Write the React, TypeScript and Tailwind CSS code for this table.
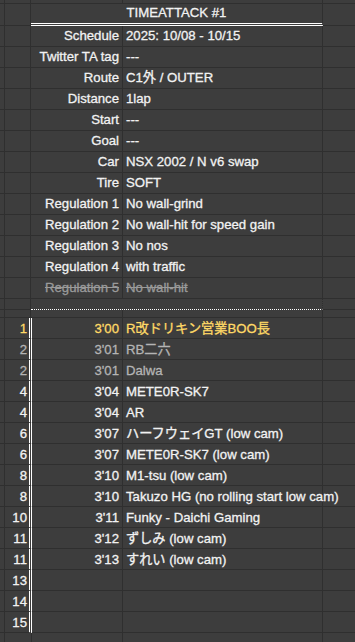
import React from "react";

type Info = { label: string; value: string; struck?: boolean };
type Result = { rank: string; time?: string; name?: string; tone?: "gold" | "dim" };

const info: Info[] = [
  { label: "Schedule", value: "2025: 10/08 - 10/15" },
  { label: "Twitter TA tag", value: "---" },
  { label: "Route", value: "C1外 / OUTER" },
  { label: "Distance", value: "1lap" },
  { label: "Start", value: "---" },
  { label: "Goal", value: "---" },
  { label: "Car", value: "NSX 2002 / N v6 swap" },
  { label: "Tire", value: "SOFT" },
  { label: "Regulation 1", value: "No wall-grind" },
  { label: "Regulation 2", value: "No wall-hit for speed gain" },
  { label: "Regulation 3", value: "No nos" },
  { label: "Regulation 4", value: "with traffic" },
  { label: "Regulation 5", value: "No wall-hit", struck: true },
];

const results: Result[] = [
  { rank: "1", time: "3'00", name: "R改ドリキン営業BOO長", tone: "gold" },
  { rank: "2", time: "3'01", name: "RB二六", tone: "dim" },
  { rank: "2", time: "3'01", name: "Dalwa", tone: "dim" },
  { rank: "4", time: "3'04", name: "METE0R-SK7" },
  { rank: "4", time: "3'04", name: "AR" },
  { rank: "6", time: "3'07", name: "ハーフウェイGT (low cam)" },
  { rank: "6", time: "3'07", name: "METE0R-SK7 (low cam)" },
  { rank: "8", time: "3'10", name: "M1-tsu (low cam)" },
  { rank: "8", time: "3'10", name: "Takuzo HG (no rolling start low cam)" },
  { rank: "10", time: "3'11", name: "Funky - Daichi Gaming" },
  { rank: "11", time: "3'12", name: "ずしみ (low cam)" },
  { rank: "11", time: "3'13", name: "すれい (low cam)" },
  { rank: "13" },
  { rank: "14" },
  { rank: "15" },
];

const line = "border-b border-r border-[#2f2f2f]";

function tone(t?: Result["tone"]) {
  if (t === "gold") return "text-[#ffd966]";
  if (t === "dim") return "text-[#b4b4b4]";
  return "text-[#f2f2f2]";
}

export default function App() {
  return (
    <div
      className="h-[642px] w-[355px] overflow-hidden bg-[#3d3d3d] text-[13.2px] text-[#f2f2f2] [-webkit-text-stroke:0.3px_currentColor]"
      style={{ fontFamily: '"Liberation Sans", Arial, "Noto Sans CJK JP", sans-serif' }}
    >
      {/* partial row above */}
      <div className="flex h-[4px]">
        <div className={`w-[5px] ${line}`} />
        <div className={`w-[26px] ${line}`} />
        <div className={`w-[92px] ${line}`} />
        <div className={`w-[200px] ${line}`} />
        <div className="flex-1 border-b border-[#2f2f2f]" />
      </div>

      {/* title */}
      <div className="flex h-[22px]">
        <div className={`w-[5px] ${line}`} />
        <div className={`w-[26px] ${line}`} />
        <div className="w-[292px] border-b-[3px] border-r border-double border-b-white border-r-[#2f2f2f] text-center leading-[18px]">
          TIMEATTACK #1
        </div>
        <div className="flex-1 border-b border-[#2f2f2f]" />
      </div>

      {info.map((row) => (
        <div key={row.label} className="flex h-[21px] leading-[19px]">
          <div className={`w-[5px] ${line}`} />
          <div className={`w-[26px] ${line}`} />
          <div
            className={`w-[92px] whitespace-nowrap pr-[3px] text-right ${line} ${
              row.struck ? "text-[#9a9a9a] line-through" : ""
            }`}
          >
            {row.label}
          </div>
          <div
            className={`w-[200px] whitespace-nowrap pl-[3px] ${line} ${
              row.struck ? "text-[#9a9a9a] line-through" : ""
            }`}
          >
            {row.value}
          </div>
          <div className="flex-1 border-b border-[#2f2f2f]" />
        </div>
      ))}

      {/* spacer with dotted divider */}
      <div className="flex h-[11px]">
        <div className={`w-[5px] ${line}`} />
        <div className={`w-[26px] ${line}`} />
        <div className="w-[292px] border-b border-r border-dotted border-b-white border-r-[#2f2f2f]" />
        <div className="flex-1 border-b border-[#2f2f2f]" />
      </div>
      <div className="flex h-[8px]">
        <div className={`w-[5px] ${line}`} />
        <div className={`w-[26px] ${line}`} />
        <div className={`w-[92px] ${line}`} />
        <div className={`w-[200px] ${line}`} />
        <div className="flex-1 border-b border-[#2f2f2f]" />
      </div>

      {results.map((r, i) => (
        <div key={i} className={`flex h-[21px] leading-[21px] ${tone(r.tone)}`}>
          <div className={`w-[5px] ${line}`} />
          <div className="w-[27px] border-b border-r-[3px] border-double border-b-[#2f2f2f] border-r-white pr-[2px] text-right">
            {r.rank}
          </div>
          <div className={`w-[91px] pr-[3px] text-right ${line}`}>{r.time}</div>
          <div className={`w-[200px] whitespace-nowrap pl-[3px] ${line}`}>{r.name}</div>
          <div className="flex-1 border-b border-[#2f2f2f]" />
        </div>
      ))}

      <div className="flex h-[10px]">
        <div className="w-[5px] border-r border-[#2f2f2f]" />
        <div className="w-[27px] border-r border-[#2f2f2f]" />
        <div className="w-[91px] border-r border-[#2f2f2f]" />
        <div className="w-[200px] border-r border-[#2f2f2f]" />
      </div>
    </div>
  );
}
